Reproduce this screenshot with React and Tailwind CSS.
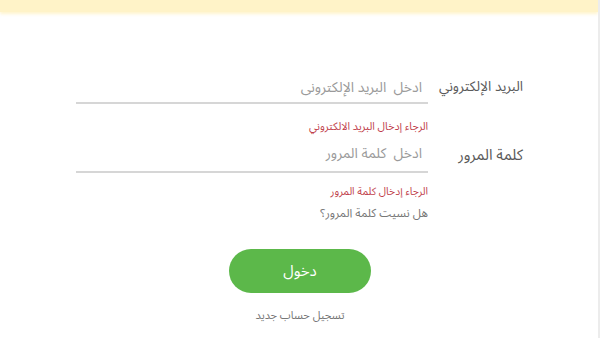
export default function App() {
  return (
    <div
      dir="rtl"
      className="w-[600px] h-[338px] bg-white overflow-hidden border-r-2 border-[#ececec]"
      style={{ fontFamily: '"Noto Sans Arabic", "DejaVu Sans", sans-serif' }}
    >
      {/* notice strip */}
      <div className="h-3 bg-[#fff3c8] shadow-[0_2px_3px_rgba(255,236,170,0.6)]" />

      <form className="mr-[75px] w-[447px] pt-[56px]">
        {/* email */}
        <div className="flex items-end">
          <label className="w-[95px] shrink-0 whitespace-nowrap h-[34px] flex items-center text-[13.75px] leading-5 text-[#5a5a5a]">
            البريد الإلكتروني
          </label>
          <input
            type="email"
            placeholder="ادخل  البريد الإلكترونى"
            className="flex-1 min-w-0 h-[36px] pt-[4px] pr-[6px] border-b-2 border-[#d6d6d6] text-[14px] text-[#555] placeholder:text-[#9a9a9a] outline-none bg-transparent"
          />
        </div>
        <p className="mr-[95px] mt-[15px] h-[16px] text-[10.75px] leading-4 text-[#bf3f4c]">
          الرجاء إدخال البريد الالكتروني
        </p>

        {/* password */}
        <div className="flex items-end">
          <label className="w-[95px] shrink-0 whitespace-nowrap h-[36px] flex items-center text-[15px] leading-5 text-[#5a5a5a]">
            كلمة المرور
          </label>
          <input
            type="password"
            placeholder="ادخل  كلمة المرور"
            className="flex-1 min-w-0 h-[38px] pr-[6px] border-b-2 border-[#d6d6d6] text-[14px] text-[#555] placeholder:text-[#9a9a9a] outline-none bg-transparent"
          />
        </div>
        <p className="mr-[95px] mt-[11px] h-[16px] text-[10.5px] leading-4 text-[#bf3f4c]">
          الرجاء إدخال كلمة المرور
        </p>
        <a className="block mr-[95px] mt-[6px] h-[16px] text-[11.75px] leading-4 text-[#777]">
          هل نسيت كلمة المرور؟
        </a>
      </form>

      <div className="flex flex-col items-center mt-[27px] pl-[2px]">
        <button
          type="button"
          className="w-[142px] h-[44px] rounded-full bg-[#5cb84a] text-white text-[15px] leading-5 font-normal"
        >
          دخول
        </button>
        <a className="block mt-[15px] h-[16px] text-[11px] leading-4 text-[#777]">
          تسجيل حساب جديد
        </a>
      </div>
    </div>
  );
}
